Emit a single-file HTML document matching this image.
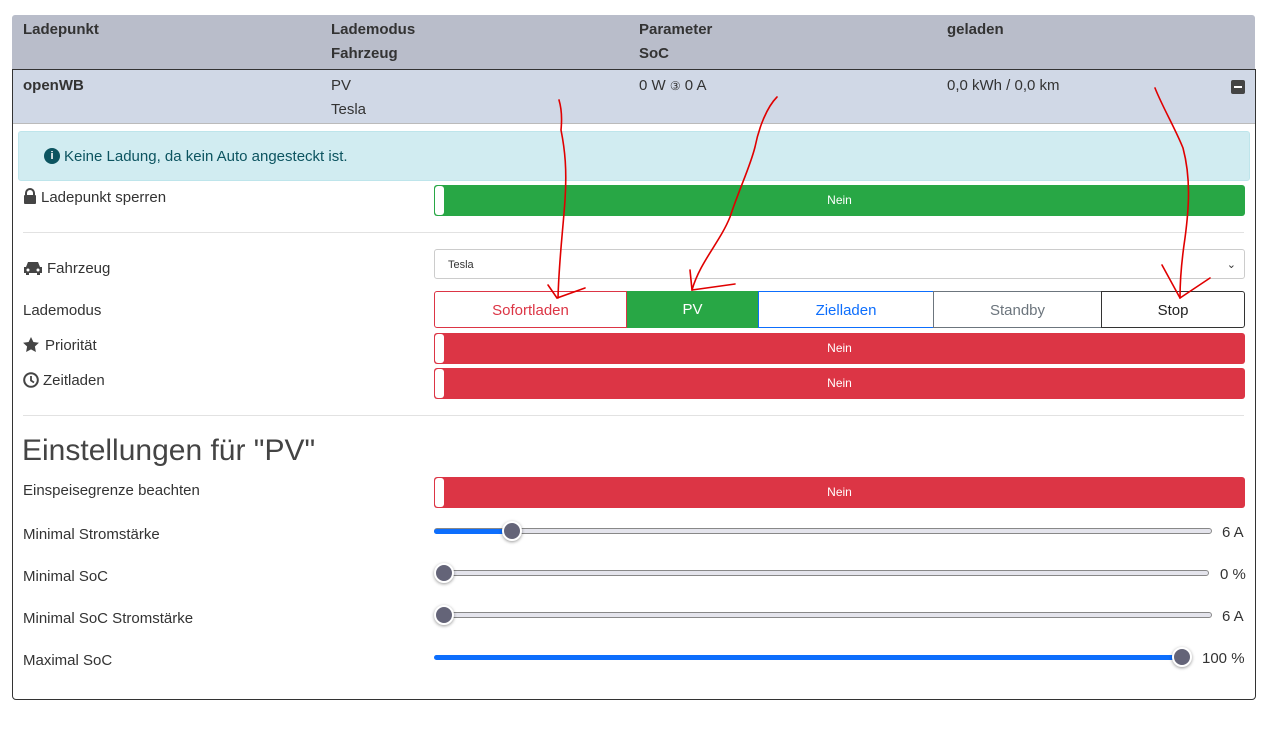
<!DOCTYPE html>
<html><head><meta charset="utf-8"><style>
*{box-sizing:border-box;margin:0;padding:0}
body{width:1273px;height:739px;background:#fff;font-family:"Liberation Sans",sans-serif;font-size:15px;color:#333;position:relative;overflow:hidden}
.a{position:absolute;white-space:nowrap}
.l{line-height:24px}
.b{font-weight:bold}
.tog{position:absolute;left:434px;width:811px;height:31px;border-radius:3px;color:#fff;font-size:12px;text-align:center;line-height:31px}
.tog::before{content:"";position:absolute;left:1px;top:1px;width:9px;height:29px;background:#fff;border-radius:3px}
.g{background:#28a745}.r{background:#dc3545}
.trk{position:absolute;left:434px;height:6px;border:1px solid #888;border-radius:3px;background:#e4e4ec}
.fill{position:absolute;left:434px;height:5px;background:#0d6efd;border-radius:3px}
.th{position:absolute;width:20px;height:20px;border-radius:50%;background:#646478;border:2px solid #fff;box-shadow:0 1px 3px rgba(0,0,0,.4)}
.hr{position:absolute;left:23px;width:1221px;height:1px;background:#e2e2e2}
.btn{position:absolute;top:291px;height:37px;text-align:center;line-height:37px;font-size:15px}
</style></head><body>
<div class="a" style="left:12px;top:15px;width:1243px;height:54px;background:#b9bdca;border-radius:3px 3px 0 0"></div>
<div class="a" style="left:12px;top:69px;width:1244px;height:631px;border:1px solid #333;border-radius:0 0 4px 4px"></div>
<div class="a" style="left:13px;top:70px;width:1242px;height:54px;background:#d0d8e6;border-bottom:1px solid #bbb"></div>
<div class="a b l" style="left:23px;top:18px">Ladepunkt</div>
<div class="a b l" style="left:331px;top:18px">Lademodus<br>Fahrzeug</div>
<div class="a b l" style="left:639px;top:18px">Parameter<br>SoC</div>
<div class="a b l" style="left:947px;top:18px">geladen</div>
<div class="a b l" style="left:23px;top:74px">openWB</div>
<div class="a l" style="left:331px;top:74px">PV<br>Tesla</div>
<div class="a l" style="left:639px;top:74px">0 W <span style="font-size:12px">③</span> 0 A</div>
<div class="a l" style="left:947px;top:74px">0,0 kWh / 0,0 km</div>
<div class="a" style="left:1231px;top:80px;width:14px;height:14px;background:#444;border-radius:2px"><div style="position:absolute;left:3px;top:6px;width:8px;height:2px;background:#fff"></div></div>
<div class="a" style="left:18px;top:131px;width:1232px;height:50px;background:#d1ecf1;border:1px solid #bee5eb;border-radius:3px"></div>
<div class="a" style="left:44px;top:148px;width:16px;height:16px;border-radius:50%;background:#0c5460;color:#fff;font-size:11px;font-weight:bold;text-align:center;line-height:16px">i</div>
<div class="a l" style="left:64px;top:145px;color:#0c5460">Keine Ladung, da kein Auto angesteckt ist.</div>
<svg class="a" style="left:23px;top:188px" width="14" height="16"><path d="M3 7V5a4 4 0 0 1 8 0v2" stroke="#444" stroke-width="2" fill="none"/><rect x="1" y="7" width="12" height="9" rx="1" fill="#444"/></svg>
<div class="a l" style="left:41px;top:186px">Ladepunkt sperren</div>
<div class="tog g" style="top:185px">Nein</div>
<div class="hr" style="top:232px"></div>
<svg class="a" style="left:23px;top:261px" width="20" height="14"><path d="M3 6l2-5h10l2 5h2v6h-2v2h-3v-2H6v2H3v-2H1V6z" fill="#444"/><circle cx="5" cy="9" r="1.5" fill="#fff"/><circle cx="15" cy="9" r="1.5" fill="#fff"/></svg>
<div class="a l" style="left:47px;top:257px">Fahrzeug</div>
<div class="a" style="left:434px;top:249px;width:811px;height:30px;border:1px solid #ccc;border-radius:3px;font-size:11px;line-height:30px;padding-left:13px">Tesla<span style="position:absolute;right:8px;font-size:11px">⌄</span></div>
<div class="a l" style="left:23px;top:299px">Lademodus</div>
<div class="btn" style="left:434px;width:193px;border:1px solid #dc3545;border-radius:3px 0 0 3px;color:#dc3545">Sofortladen</div>
<div class="btn" style="left:627px;width:131px;background:#28a745;color:#fff">PV</div>
<div class="btn" style="left:758px;width:176px;border:1px solid #0d6efd;color:#0d6efd">Zielladen</div>
<div class="btn" style="left:933px;width:169px;border:1px solid #6c757d;color:#6c757d">Standby</div>
<div class="btn" style="left:1101px;width:144px;border:1px solid #333;border-radius:0 3px 3px 0;color:#222">Stop</div>
<svg class="a" style="left:23px;top:337px" width="16" height="16"><path d="M8 0l2.4 5 5.5.7-4 3.8 1 5.5L8 12.4 3.1 15l1-5.5-4-3.8L5.6 5z" fill="#444"/></svg>
<div class="a l" style="left:45px;top:334px">Priorität</div>
<div class="tog r" style="top:333px">Nein</div>
<svg class="a" style="left:23px;top:372px" width="16" height="16"><circle cx="8" cy="8" r="6.8" stroke="#444" stroke-width="2" fill="none"/><path d="M8 4v4.5l3 2" stroke="#444" stroke-width="1.8" fill="none"/></svg>
<div class="a l" style="left:43px;top:369px">Zeitladen</div>
<div class="tog r" style="top:368px">Nein</div>
<div class="hr" style="top:415px"></div>
<div class="a" style="left:22px;top:434px;font-size:30px;color:#444">Einstellungen für "PV"</div>
<div class="a l" style="left:23px;top:479px">Einspeisegrenze beachten</div>
<div class="tog r" style="top:477px">Nein</div>
<div class="a l" style="left:23px;top:523px">Minimal Stromstärke</div>
<div class="trk" style="top:528px;width:778px"></div><div class="fill" style="top:529px;width:78px"></div><div class="th" style="left:502px;top:521px"></div>
<div class="a l" style="left:1222px;top:521px">6 A</div>
<div class="a l" style="left:23px;top:565px">Minimal SoC</div>
<div class="trk" style="top:570px;width:775px"></div><div class="th" style="left:434px;top:563px"></div>
<div class="a l" style="left:1220px;top:563px">0 %</div>
<div class="a l" style="left:23px;top:607px">Minimal SoC Stromstärke</div>
<div class="trk" style="top:612px;width:778px"></div><div class="th" style="left:434px;top:605px"></div>
<div class="a l" style="left:1222px;top:605px">6 A</div>
<div class="a l" style="left:23px;top:649px">Maximal SoC</div>
<div class="fill" style="top:655px;width:748px"></div><div class="th" style="left:1172px;top:647px"></div>
<div class="a l" style="left:1202px;top:647px">100 %</div>
<svg class="a" style="left:0;top:0" width="1273" height="739" fill="none" stroke="#e00000" stroke-width="1.6" stroke-linecap="round">
<path d="M559 100c3 10 3 20 2 30 4 20 6 40 4 70-2 30-6 60-7 98"/><path d="M548 285l9 13 28-10"/>
<path d="M777 97c-10 10-18 30-22 50-5 20-15 40-25 70-10 25-30 45-38 73"/><path d="M690 270l2 20 43-6"/>
<path d="M1155 88c8 20 20 40 28 60 8 30 6 60 2 90-3 20-5 40-5 60"/><path d="M1162 265l18 33 30-20"/>
</svg>
</body></html>
